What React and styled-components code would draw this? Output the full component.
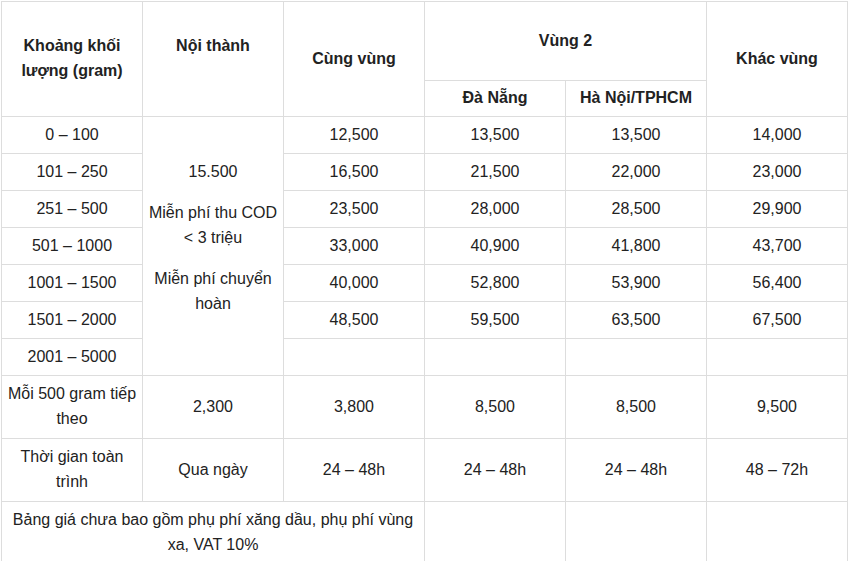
import React from "react";
import styled, { createGlobalStyle } from "styled-components";

const GlobalStyle = createGlobalStyle`
  html, body {
    margin: 0;
    padding: 0;
    background: #ffffff;
  }
  body {
    font-family: "Liberation Sans", Arial, sans-serif;
    color: #222222;
  }
`;

const weightRows = [
  ["0 – 100", "12,500", "13,500", "13,500", "14,000"],
  ["101 – 250", "16,500", "21,500", "22,000", "23,000"],
  ["251 – 500", "23,500", "28,000", "28,500", "29,900"],
  ["501 – 1000", "33,000", "40,900", "41,800", "43,700"],
  ["1001 – 1500", "40,000", "52,800", "53,900", "56,400"],
  ["1501 – 2000", "48,500", "59,500", "63,500", "67,500"],
  ["2001 – 5000", "", "", "", ""],
];

const extraRows = [
  ["Mỗi 500 gram tiếp theo", "2,300", "3,800", "8,500", "8,500", "9,500"],
  ["Thời gian toàn trình", "Qua ngày", "24 – 48h", "24 – 48h", "24 – 48h", "48 – 72h"],
];

export default function App() {
  return (
    <>
      <GlobalStyle />
      <Wrapper>
        <Table>
          <colgroup>
            {[0, 1, 2, 3, 4, 5].map((i) => (
              <col key={i} style={{ width: 141 }} />
            ))}
          </colgroup>
          <thead>
            <Row h={79}>
              <Head rowSpan={2}>
                Khoảng khối
                <br />
                lượng (gram)
              </Head>
              <Head rowSpan={2}>
                Nội thành
                <br />
                &nbsp;
              </Head>
              <Head rowSpan={2}>Cùng vùng</Head>
              <Head colSpan={2}>Vùng 2</Head>
              <Head rowSpan={2}>Khác vùng</Head>
            </Row>
            <Row h={36}>
              <Head>Đà Nẵng</Head>
              <Head>Hà Nội/TPHCM</Head>
            </Row>
          </thead>
          <tbody>
            {weightRows.map((r, i) => (
              <Row h={37} key={r[0]}>
                <Cell>{r[0]}</Cell>
                {i === 0 && (
                  <Cell rowSpan={7} lift={16}>
                    <Para>15.500</Para>
                    <Para>
                      Miễn phí thu COD
                      <br />
                      &lt; 3 triệu
                    </Para>
                    <Para>Miễn phí chuyển hoàn</Para>
                  </Cell>
                )}
                {r.slice(1).map((v, j) => (
                  <Cell key={j}>{v}</Cell>
                ))}
              </Row>
            ))}
            {extraRows.map((r) => (
              <Row h={63} key={r[0]}>
                {r.map((v, j) => (
                  <Cell key={j}>{v}</Cell>
                ))}
              </Row>
            ))}
            <Row h={63}>
              <Cell colSpan={3}>
                Bảng giá chưa bao gồm phụ phí xăng dầu, phụ phí vùng xa, VAT 10%
              </Cell>
              <Cell />
              <Cell />
              <Cell />
            </Row>
          </tbody>
        </Table>
      </Wrapper>
    </>
  );
}

const Wrapper = styled.div`
  padding: 1px 0 0 1px;
`;

const Table = styled.table`
  border-collapse: collapse;
  table-layout: fixed;
  width: 846px;
  font-size: 16px;
  line-height: 25px;
`;

const Row = styled.tr`
  height: ${(p) => p.h}px;
`;

const Head = styled.th`
  border: 1px solid #dddddd;
  padding: 4px 4px 6px;
  font-weight: 700;
  text-align: center;
  vertical-align: middle;
  color: #222222;
`;

const Cell = styled.td`
  border: 1px solid #dddddd;
  padding: 4px 4px ${(p) => 6 + (p.lift || 0)}px;
  text-align: center;
  vertical-align: middle;
  color: #222222;
`;

const Para = styled.p`
  margin: 0 0 16px;

  &:last-child {
    margin-bottom: 0;
  }
`;
